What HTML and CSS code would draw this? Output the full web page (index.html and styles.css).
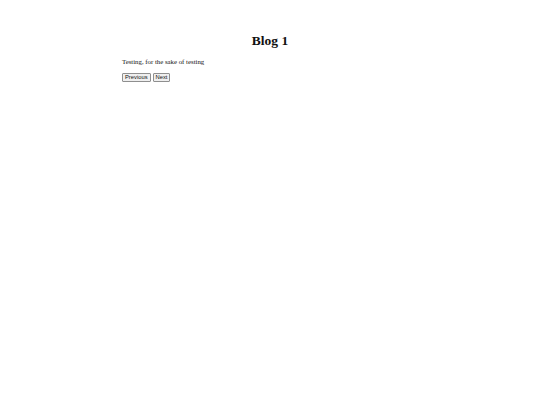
FILE: index.html
```html
<!DOCTYPE html>
<html>
<head>
<meta charset="utf-8">
<link rel="stylesheet" href="styles.css">
</head>
<body>
<main class="page">
  <h1 class="title">Blog 1</h1>
  <p class="body-text">Testing, for the sake of testing</p>
  <div class="nav">
    <button class="btn">Previous</button>
    <button class="btn">Next</button>
  </div>
</main>
</body>
</html>
```
FILE: styles.css
```css
html, body {
  margin: 0;
  padding: 0;
  background: #fff;
}
.page {
  width: 296px;
  margin: 0 auto;
  padding-top: 33px;
  font-family: "Liberation Serif", "Times New Roman", serif;
  color: #111;
}
.title {
  margin: 0;
  text-align: center;
  font-size: 13.5px;
  line-height: 16px;
  font-weight: bold;
}
.body-text {
  margin: 8px 0 0 0;
  font-size: 6.8px;
  line-height: 9px;
}
.nav {
  margin-top: 7px;
  display: flex;
  gap: 2px;
}
.btn {
  font-family: "Liberation Sans", Arial, sans-serif;
  font-size: 5.8px;
  line-height: 7px;
  padding: 0 2px;
  height: 9px;
  border: 1px solid #8f8f8f;
  border-radius: 1px;
  background: #efefef;
  color: #111;
}
```
